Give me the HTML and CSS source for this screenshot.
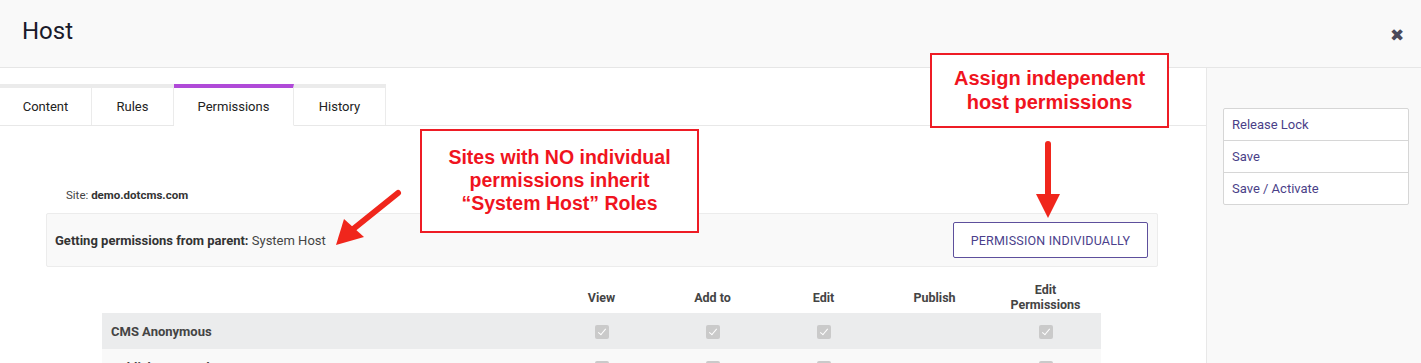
FILE: index.html
```html
<!DOCTYPE html>
<html>
<head>
    <title>Host</title>
    <link rel="stylesheet" href="styles.css">
</head>
<body>
    <div class="header">
        <h1>Host</h1>
        <span class="close">&#10006;</span>
    </div>

    <div class="layout">
        <div class="main">
            <div class="tabs">
                <div class="tab">Content</div>
                <div class="tab">Rules</div>
                <div class="tab active">Permissions</div>
                <div class="tab">History</div>
            </div>

            <div class="content">
                <div class="site">Site: <b>demo.dotcms.com</b></div>

                <div class="inherit">
                    <span><b>Getting permissions from parent:</b> System Host</span>
                    <button class="btn-outline">PERMISSION INDIVIDUALLY</button>
                </div>

                <table class="perms">
                    <tr>
                        <th class="name"></th>
                        <th>View</th>
                        <th>Add to</th>
                        <th>Edit</th>
                        <th>Publish</th>
                        <th>Edit<br>Permissions</th>
                    </tr>
                    <tr class="odd">
                        <td class="name">CMS Anonymous</td>
                        <td><span class="check"></span></td>
                        <td><span class="check"></span></td>
                        <td><span class="check"></span></td>
                        <td></td>
                        <td><span class="check"></span></td>
                    </tr>
                    <tr class="even">
                        <td class="name">Publisher / Legal</td>
                        <td><span class="check"></span></td>
                        <td><span class="check"></span></td>
                        <td><span class="check"></span></td>
                        <td></td>
                        <td><span class="check"></span></td>
                    </tr>
                </table>
            </div>

            <!-- annotations -->
            <div class="note note-left">Sites with NO individual permissions inherit &ldquo;System Host&rdquo; Roles</div>
            <div class="note note-right">Assign independent host permissions</div>
            <svg class="arrow arrow-left" width="90" height="70" viewBox="0 0 90 70">
                <line x1="68" y1="8" x2="22" y2="45" stroke="#f0261c" stroke-width="6" stroke-linecap="round"/>
                <polygon points="6,60 14,34 34,52" fill="#f0261c"/>
            </svg>
            <svg class="arrow arrow-down" width="40" height="90" viewBox="0 0 40 90">
                <line x1="20" y1="4" x2="20" y2="56" stroke="#f0261c" stroke-width="6" stroke-linecap="round"/>
                <polygon points="8,54 32,54 20,78" fill="#f0261c"/>
            </svg>
        </div>

        <div class="sidebar">
            <div class="actions">
                <div class="action">Release Lock</div>
                <div class="action">Save</div>
                <div class="action">Save / Activate</div>
            </div>
        </div>
    </div>
</body>
</html>
```

FILE: styles.css
```css
body {
    font-family: Roboto, "Liberation Sans", Arial, sans-serif;
    margin: 0;
    padding: 0;
    background-color: #fff;
    color: #222;
    height: 363px;
    overflow: hidden;
}
.header {
    height: 68px;
    background-color: #f9f9f9;
    border-bottom: 1px solid #e6e6e6;
    display: flex;
    align-items: center;
    justify-content: space-between;
    padding: 0 17px 0 22px;
    box-sizing: border-box;
}
.header h1 {
    font-size: 24px;
    font-weight: 400;
    margin: 0 0 6px 0;
    color: #1a1a2a;
}
.close {
    font-size: 17px;
    color: #4a4a5a;
    margin-top: 2px;
}
.layout {
    display: flex;
    height: 295px;
}
.main {
    flex: 1;
    position: relative;
}
.tabs {
    display: flex;
    margin-top: 16px;
    border-bottom: 1px solid #e8e8e8;
}
.tab {
    border-top: 4px solid #ebebeb;
    border-right: 1px solid #ebebeb;
    height: 37px;
    line-height: 37px;
    font-size: 13px;
    color: #222;
    text-align: center;
}
.tab:nth-child(1) { width: 91px; }
.tab:nth-child(2) { width: 81px; }
.tab:nth-child(3) { width: 119px; }
.tab:nth-child(4) { width: 91px; }
.tab.active {
    border-top-color: #b04ad8;
    border-bottom: 1px solid #fff;
    margin-bottom: -1px;
}
.content {
    padding: 62px 48px 0 46px;
}
.site {
    font-size: 11.5px;
    color: #444;
    padding-left: 20px;
    margin-bottom: 11px;
}
.site b {
    color: #333;
}
.inherit {
    display: flex;
    align-items: center;
    justify-content: space-between;
    background-color: #f9f9f9;
    border: 1px solid #ececec;
    border-radius: 2px;
    height: 54px;
    box-sizing: border-box;
    padding: 0 9px 0 8px;
    font-size: 13px;
    color: #444;
}
.inherit b {
    color: #333;
}
.btn-outline {
    font-family: inherit;
    background: #fff;
    border: 1px solid #5d4f9c;
    border-radius: 2px;
    color: #4b3f8c;
    font-size: 12.5px;
    width: 195px;
    height: 36px;
    margin: 0;
    letter-spacing: 0.2px;
}
.perms {
    margin: 12px 0 0 56px;
    width: 999px;
    border-collapse: collapse;
}
.perms th {
    font-size: 12.5px;
    font-weight: 700;
    color: #444;
    height: 32px;
    width: 111px;
    line-height: 15px;
    vertical-align: middle;
    padding: 2px 0 0 0;
}
.perms th.name {
    width: auto;
}
.perms td {
    height: 36px;
    text-align: center;
    padding: 0;
}
.perms td.name {
    text-align: left;
    padding-left: 9px;
    font-size: 13px;
    font-weight: 700;
    color: #444;
}
.perms tr.odd {
    background-color: #ebeced;
}
.perms tr.even {
    background-color: #f9f9f9;
}
.check {
    display: inline-block;
    width: 14px;
    height: 14px;
    background-color: #cacaca;
    border-radius: 2px;
    position: relative;
    vertical-align: middle;
}
.check::after {
    content: "";
    position: absolute;
    left: 5px;
    top: 2px;
    width: 3px;
    height: 7px;
    border: solid #fff;
    border-width: 0 1px 1px 0;
    transform: rotate(40deg);
}
.sidebar {
    width: 215px;
    background-color: #f9f9f9;
    border-left: 1px solid #e8e8e8;
    padding: 40px 12px 0 16px;
    box-sizing: border-box;
}
.actions {
    background: #fff;
    border: 1px solid #d6d6d6;
    border-radius: 2px;
}
.action {
    height: 31px;
    line-height: 31px;
    padding-left: 8px;
    font-size: 13px;
    color: #4a3f88;
    border-bottom: 1px solid #d6d6d6;
}
.action:last-child {
    border-bottom: none;
}
.note {
    position: absolute;
    background: #fff;
    border: 2px solid #ee1c25;
    color: #f0141e;
    font-family: "Liberation Sans", Arial, sans-serif;
    font-weight: 700;
    text-align: center;
    box-sizing: border-box;
    display: flex;
    align-items: center;
    justify-content: center;
}
.note-left {
    left: 420px;
    top: 61px;
    width: 279px;
    height: 104px;
    font-size: 19.5px;
    line-height: 23px;
    padding: 0 10px 2px;
}
.note-right {
    left: 930px;
    top: -15px;
    width: 239px;
    height: 75px;
    font-size: 20px;
    line-height: 24px;
    padding: 0 10px 2px;
}
.arrow {
    position: absolute;
}
.arrow-left {
    left: 330px;
    top: 117px;
}
.arrow-down {
    left: 1028px;
    top: 72px;
}
```
